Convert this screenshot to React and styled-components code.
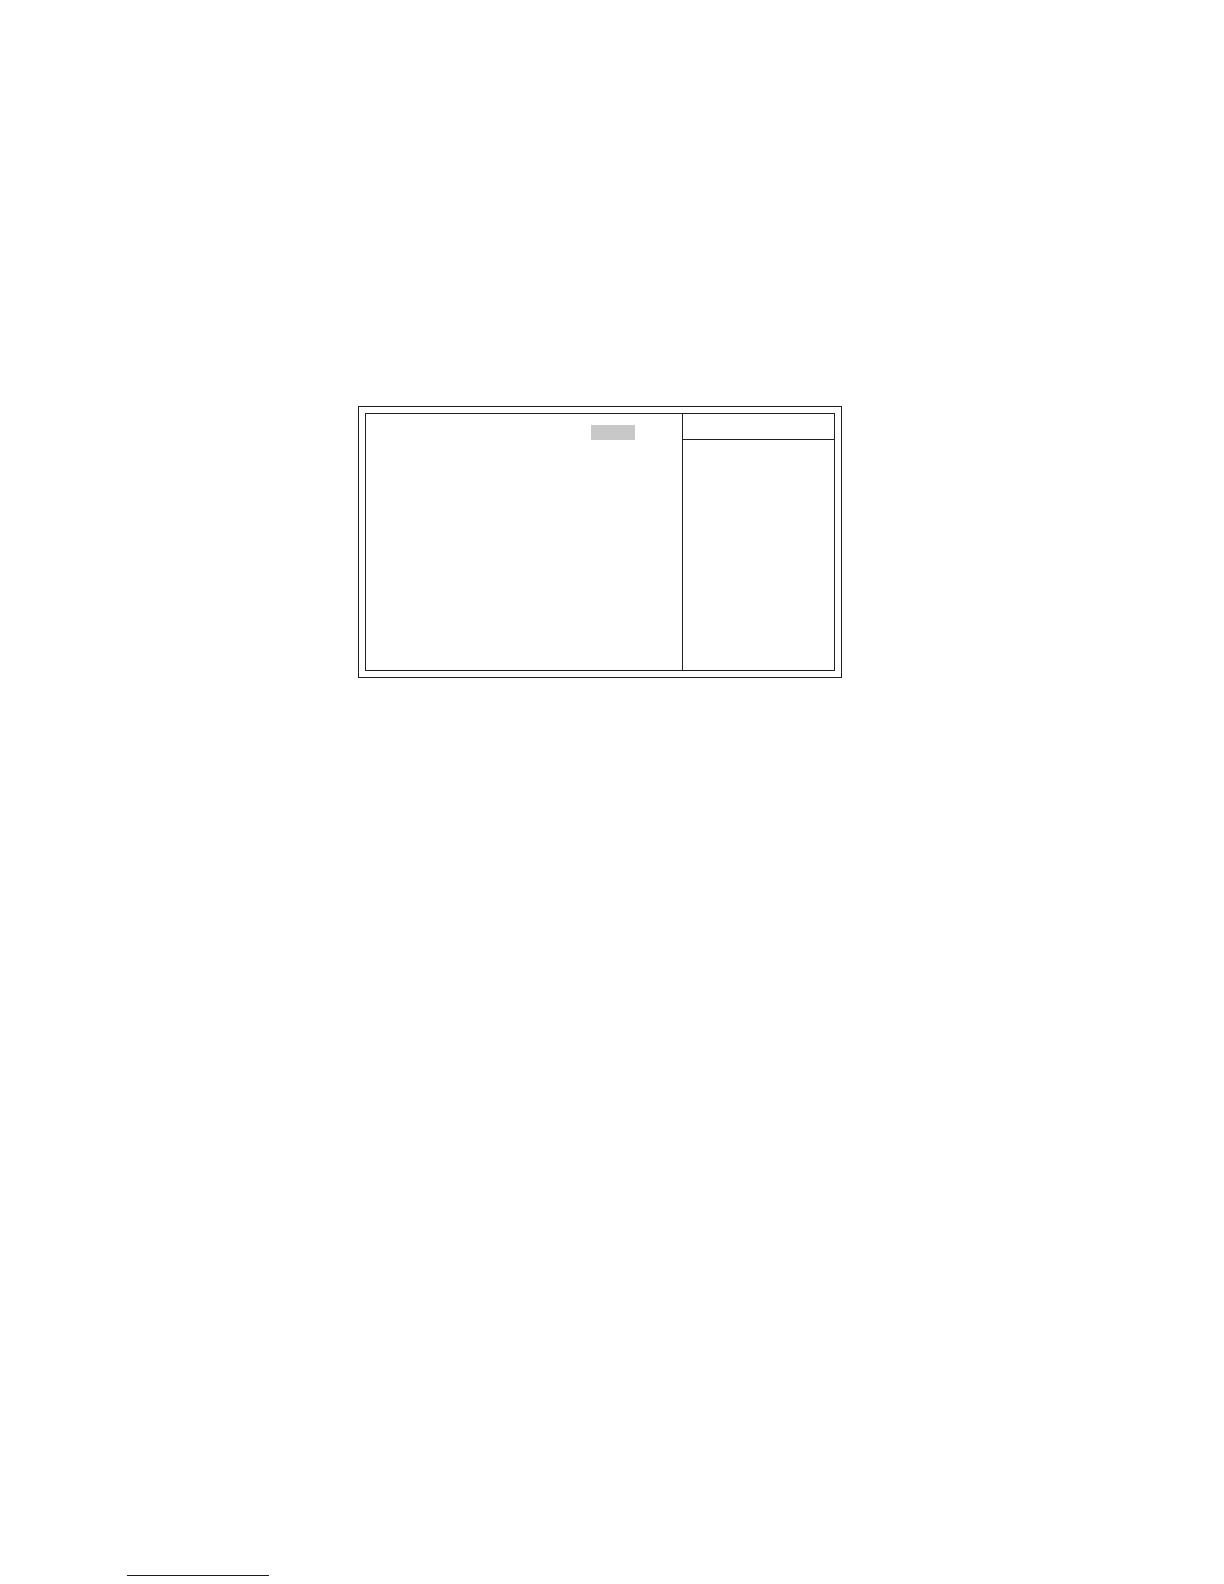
import React from "react";
import styled, { createGlobalStyle } from "styled-components";

const GlobalStyle = createGlobalStyle`
    body {
        margin: 0;
        background: #ffffff;
        font-family: "Liberation Sans", Arial, sans-serif;
    }

    * {
        box-sizing: border-box;
    }
`;

const Page = styled.div`
    display: flex;
    flex-direction: column;
    justify-content: space-between;
    min-height: 100vh;
    padding: 406px 127px 8px;
`;

// double border: the frame is the outer line, the screen is the inner one
const Frame = styled.main`
    margin: 0 255px 0 231px;
    padding: 6px;
    border: 1px solid #231f20;
`;

const Screen = styled.div`
    display: grid;
    grid-template-columns: 316fr 152fr;
    min-height: 258px;
    border: 1px solid #231f20;
`;

const Settings = styled.section`
    display: flex;
    justify-content: flex-end;
    align-items: flex-start;
    padding: 11px 47px;
`;

const SelectedValue = styled.div`
    width: 44px;
    height: 15px;
    background: #c7c8c8;
`;

const Help = styled.aside`
    border-left: 1px solid #231f20;
`;

const HelpHeader = styled.header`
    height: 26px;
    border-bottom: 1px solid #231f20;
`;

const Footer = styled.footer`
    display: flex;
`;

const FooterLink = styled.a`
    width: 142px;
    height: 16px;
    border-bottom: 1px solid #0c0c8c;
`;

const App = () => {
    return (
        <>
            <GlobalStyle />
            <Page>
                <Frame>
                    <Screen>
                        <Settings>
                            <SelectedValue />
                        </Settings>
                        <Help>
                            <HelpHeader />
                        </Help>
                    </Screen>
                </Frame>
                <Footer>
                    <FooterLink href="#top" aria-label="Back to top" />
                </Footer>
            </Page>
        </>
    );
};

export default App;
